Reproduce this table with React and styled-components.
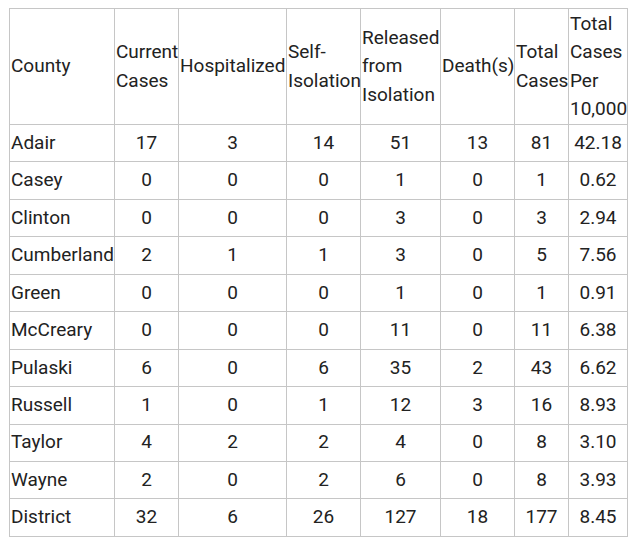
import React from "react";
import styled, { createGlobalStyle } from "styled-components";

const GlobalStyle = createGlobalStyle`
  html, body {
    margin: 0;
    padding: 0;
    background: #ffffff;
  }
`;

const columns = [
  { lines: ["County"], width: 105 },
  { lines: ["Current", "Cases"], width: 64 },
  { lines: ["Hospitalized"], width: 108 },
  { lines: ["Self-", "Isolation"], width: 74 },
  { lines: ["Released", "from", "Isolation"], width: 80 },
  { lines: ["Death(s)"], width: 74 },
  { lines: ["Total", "Cases"], width: 54 },
  { lines: ["Total", "Cases", "Per", "10,000"], width: 59 },
];

const rows = [
  ["Adair", 17, 3, 14, 51, 13, 81, "42.18"],
  ["Casey", 0, 0, 0, 1, 0, 1, "0.62"],
  ["Clinton", 0, 0, 0, 3, 0, 3, "2.94"],
  ["Cumberland", 2, 1, 1, 3, 0, 5, "7.56"],
  ["Green", 0, 0, 0, 1, 0, 1, "0.91"],
  ["McCreary", 0, 0, 0, 11, 0, 11, "6.38"],
  ["Pulaski", 6, 0, 6, 35, 2, 43, "6.62"],
  ["Russell", 1, 0, 1, 12, 3, 16, "8.93"],
  ["Taylor", 4, 2, 2, 4, 0, 8, "3.10"],
  ["Wayne", 2, 0, 2, 6, 0, 8, "3.93"],
  ["District", 32, 6, 26, 127, 18, 177, "8.45"],
];

const Page = styled.div`
  padding: 8px 0 0 9px;
`;

const Table = styled.table`
  border-collapse: collapse;
  table-layout: fixed;
  width: 618px;
  font-family: Roboto, "Liberation Sans", sans-serif;
  font-size: 19px;
  line-height: 28.5px;
  color: #222222;
`;

const HeadCell = styled.th`
  border: 1px solid #c6c6c6;
  padding: 0 0 0 1px;
  height: 115px;
  font-weight: 400;
  text-align: left;
  vertical-align: middle;
  white-space: nowrap;
  overflow: visible;
`;

const Line = styled.span`
  display: block;
`;

const Cell = styled.td`
  border: 1px solid #c6c6c6;
  padding: 0 1px;
  height: 36.45px;
  text-align: ${(p) => (p.$name ? "left" : "center")};
  vertical-align: middle;
  white-space: nowrap;
`;

export default function App() {
  return (
    <Page>
      <GlobalStyle />
      <Table>
        <colgroup>
          {columns.map((c, i) => (
            <col key={i} style={{ width: c.width }} />
          ))}
        </colgroup>
        <thead>
          <tr>
            {columns.map((c, i) => (
              <HeadCell key={i}>
                {c.lines.map((l) => (
                  <Line key={l}>{l}</Line>
                ))}
              </HeadCell>
            ))}
          </tr>
        </thead>
        <tbody>
          {rows.map((r) => (
            <tr key={r[0]}>
              {r.map((v, i) => (
                <Cell key={i} $name={i === 0}>
                  {v}
                </Cell>
              ))}
            </tr>
          ))}
        </tbody>
      </Table>
    </Page>
  );
}
